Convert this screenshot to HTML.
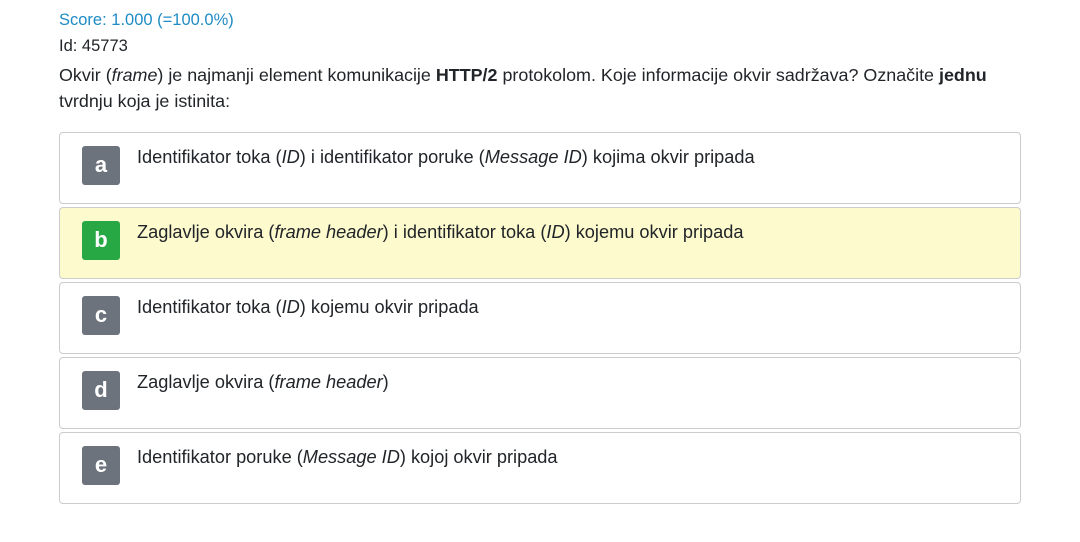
<!DOCTYPE html>
<html><head><meta charset="utf-8"><style>
body{margin:0;background:#fff;font-family:"Liberation Sans",sans-serif;color:#212529;width:1080px;height:542px;overflow:hidden}
.t{position:absolute;left:59px;font-size:16.5px}
.box{position:absolute;left:59px;width:960px;height:70px;border:1px solid #ccc;border-radius:4px;background:#fff}
.box.y{background:#fdfacd}
.bd{position:absolute;left:22px;top:13px;width:38px;height:39px;border-radius:3px;background:#6c737d;color:#fff;font-weight:bold;font-size:22px;text-align:center;line-height:37px}
.y .bd{background:#27a844}
.tx{position:absolute;left:77px;top:14px;font-size:18.2px}
</style></head><body>
<div class="t" style="top:11px;color:#1f8bc4">Score: 1.000 (=100.0%)</div>
<div class="t" style="top:37px">Id: 45773</div>
<div class="t" style="top:62px;line-height:26px;width:980px;font-size:17.9px">Okvir (<i>frame</i>) je najmanji element komunikacije <b>HTTP/2</b> protokolom. Koje informacije okvir sadržava? Označite <b>jednu</b><br>tvrdnju koja je istinita:</div>
<div class="box" style="top:132px"><div class="bd">a</div><div class="tx">Identifikator toka (<i>ID</i>) i identifikator poruke (<i>Message ID</i>) kojima okvir pripada</div></div>
<div class="box y" style="top:207px"><div class="bd">b</div><div class="tx">Zaglavlje okvira (<i>frame header</i>) i identifikator toka (<i>ID</i>) kojemu okvir pripada</div></div>
<div class="box" style="top:282px"><div class="bd">c</div><div class="tx">Identifikator toka (<i>ID</i>) kojemu okvir pripada</div></div>
<div class="box" style="top:357px"><div class="bd">d</div><div class="tx">Zaglavlje okvira (<i>frame header</i>)</div></div>
<div class="box" style="top:432px"><div class="bd">e</div><div class="tx">Identifikator poruke (<i>Message ID</i>) kojoj okvir pripada</div></div>
</body></html>
